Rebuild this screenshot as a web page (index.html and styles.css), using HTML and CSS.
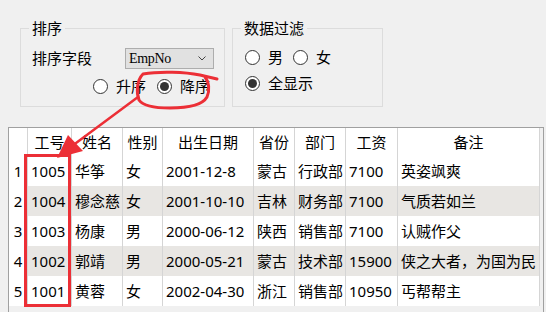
FILE: index.html
```html
<!DOCTYPE html>
<html>
<head>
<meta charset="utf-8">
<link rel="stylesheet" href="styles.css">
</head>
<body>
<div class="page">
  <div class="top">
    <fieldset class="group sort">
      <legend>排序</legend>
      <div class="field">
        <span class="label">排序字段</span>
        <div class="combo">
          <span>EmpNo</span>
          <svg class="chev" width="8" height="5" viewBox="0 0 8 5"><path d="M0.5 0.5 L4 4 L7.5 0.5" fill="none" stroke="#444" stroke-width="1"/></svg>
        </div>
      </div>
      <div class="radios sort-radios">
        <div class="radio"><span class="dot"></span>升序</div>
        <div class="radio checked"><span class="dot"></span>降序</div>
      </div>
    </fieldset>
    <fieldset class="group filter">
      <legend>数据过滤</legend>
      <div class="radios f1">
        <div class="radio"><span class="dot"></span>男</div>
        <div class="radio"><span class="dot"></span>女</div>
      </div>
      <div class="radios f2">
        <div class="radio checked"><span class="dot"></span>全显示</div>
      </div>
    </fieldset>
  </div>

  <div class="grid">
    <div class="thead">
      <div class="cell rh"></div>
      <div class="cell">工号</div>
      <div class="cell">姓名</div>
      <div class="cell">性别</div>
      <div class="cell">出生日期</div>
      <div class="cell">省份</div>
      <div class="cell">部门</div>
      <div class="cell">工资</div>
      <div class="cell">备注</div>
    </div>
    <div class="trow">
      <div class="cell rh">1</div><div class="cell">1005</div><div class="cell">华筝</div><div class="cell">女</div><div class="cell">2001-12-8</div><div class="cell">蒙古</div><div class="cell">行政部</div><div class="cell">7100</div><div class="cell">英姿飒爽</div>
    </div>
    <div class="trow alt">
      <div class="cell rh">2</div><div class="cell">1004</div><div class="cell">穆念慈</div><div class="cell">女</div><div class="cell">2001-10-10</div><div class="cell">吉林</div><div class="cell">财务部</div><div class="cell">7100</div><div class="cell">气质若如兰</div>
    </div>
    <div class="trow">
      <div class="cell rh">3</div><div class="cell">1003</div><div class="cell">杨康</div><div class="cell">男</div><div class="cell">2000-06-12</div><div class="cell">陕西</div><div class="cell">销售部</div><div class="cell">7100</div><div class="cell">认贼作父</div>
    </div>
    <div class="trow alt">
      <div class="cell rh">4</div><div class="cell">1002</div><div class="cell">郭靖</div><div class="cell">男</div><div class="cell">2000-05-21</div><div class="cell">蒙古</div><div class="cell">技术部</div><div class="cell">15900</div><div class="cell">侠之大者，为国为民</div>
    </div>
    <div class="trow">
      <div class="cell rh">5</div><div class="cell">1001</div><div class="cell">黄蓉</div><div class="cell">女</div><div class="cell">2002-04-30</div><div class="cell">浙江</div><div class="cell">销售部</div><div class="cell">10950</div><div class="cell">丐帮帮主</div>
    </div>
  </div>

  <svg class="annot" width="546" height="312" viewBox="0 0 546 312">
    <path d="M217 79 L200 75 C185 72 160 71 143 74 C137 80 136 92 139 100 C143 106 155 108 170 108 C190 108 203 104 207 97 C210 90 209 82 205 77" fill="none" stroke="#ec2f36" stroke-width="3" stroke-linecap="round" stroke-linejoin="round"/>
    <path d="M138 97 L72 146" fill="none" stroke="#ec2f36" stroke-width="2.5" stroke-linecap="round"/>
    <polygon points="57,158 68,135 83,151" fill="#ec2f36"/>
    <rect x="25.5" y="155.5" width="44" height="150" fill="none" stroke="#ec2f36" stroke-width="3"/>
  </svg>
</div>
</body>
</html>
```

FILE: styles.css
```css
html, body {
  margin: 0;
  padding: 0;
}

body {
  width: 546px;
  height: 312px;
  overflow: hidden;
  background: #f0f0f0;
  color: #000;
  font-family: "Noto Sans", "Noto Sans CJK SC", sans-serif;
  font-size: 15px;
}

.page {
  position: relative;
  height: 312px;
  display: flex;
  flex-direction: column;
}

.top {
  display: flex;
  align-items: stretch;
  gap: 7px;
  padding: 19px 0 0 20px;
}

.group {
  margin: 0;
  padding: 0;
  border: 1px solid #dcdcdc;
  box-sizing: border-box;
  min-width: 0;
}

.group legend {
  margin-left: 8px;
  padding: 0 3px;
  height: 18px;
  line-height: 18px;
  font-size: 15px;
  color: #000;
}

.sort {
  width: 205px;
  padding-bottom: 11px;
}

.filter {
  width: 151px;
  padding-bottom: 14px;
}

.field {
  display: flex;
  align-items: center;
  justify-content: space-between;
  height: 21px;
  margin-top: 11px;
  padding: 0 10px 0 11px;
}

.label {
  line-height: 21px;
}

.combo {
  width: 89px;
  height: 21px;
  box-sizing: border-box;
  border: 1px solid #adadad;
  background: #e1e1e1;
  display: flex;
  align-items: center;
  justify-content: space-between;
  padding: 0 7px 0 3px;
  font-family: "Liberation Serif", serif;
  font-size: 14px;
  letter-spacing: -0.3px;
  line-height: 19px;
}

.chev {
  display: block;
}

.radios {
  display: flex;
  align-items: center;
  height: 18px;
}

.sort-radios {
  margin-top: 8px;
  padding-left: 72px;
  gap: 11px;
}

.f1 {
  margin-top: 11px;
  padding-left: 12px;
  gap: 10px;
}

.f2 {
  margin-top: 8px;
  padding-left: 12px;
}

.radio {
  display: flex;
  align-items: center;
  gap: 8px;
  line-height: 18px;
}

.dot {
  width: 15px;
  height: 15px;
  box-sizing: border-box;
  border: 1px solid #333;
  border-radius: 50%;
  background: #fff;
  display: flex;
  align-items: center;
  justify-content: center;
}

.checked .dot::after {
  content: "";
  width: 9px;
  height: 9px;
  border-radius: 50%;
  background: #333;
}

.grid {
  margin: 20px 0 0 8px;
  width: 536px;
  flex: 1;
  box-sizing: border-box;
  border: 1px solid #a0a0a0;
  border-bottom: none;
  background: #f0f0f0;
}

.thead,
.trow {
  display: grid;
  grid-template-columns: 19px 44px 51px 40px 91px 41px 51px 52px 142px;
}

.thead {
  height: 28px;
}

.trow {
  height: 30px;
}

.cell {
  box-sizing: border-box;
  border-right: 1px solid #d5d5d5;
  background: #fff;
  padding-left: 3px;
  line-height: 30px;
  white-space: nowrap;
  overflow: hidden;
}

.thead .cell {
  padding: 0;
  text-align: center;
  line-height: 28px;
}

.rh {
  padding: 0;
  text-align: center;
}

.trow.alt .cell:not(.rh) {
  background: #e8e6e3;
}

.annot {
  position: absolute;
  left: 0;
  top: 0;
  pointer-events: none;
}
```
